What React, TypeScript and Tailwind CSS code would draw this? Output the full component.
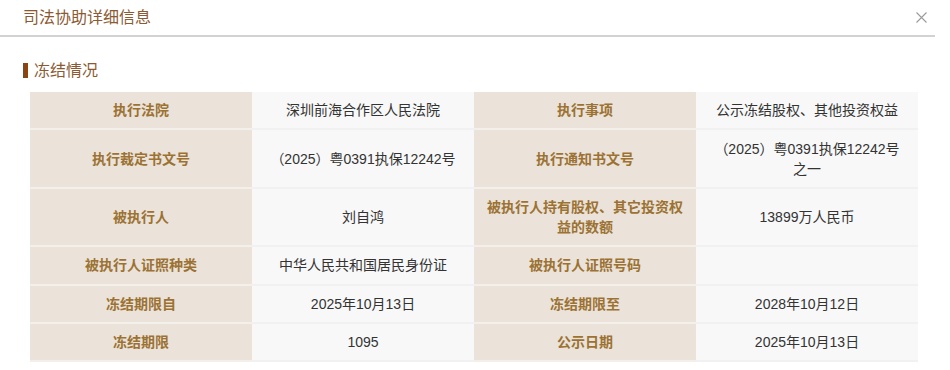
import React from 'react'

const rows: [string, string, string, string][] = [
  ['执行法院', '深圳前海合作区人民法院', '执行事项', '公示冻结股权、其他投资权益'],
  ['执行裁定书文号', '（2025）粤0391执保12242号', '执行通知书文号', '（2025）粤0391执保12242号之一'],
  ['被执行人', '刘自鸿', '被执行人持有股权、其它投资权益的数额', '13899万人民币'],
  ['被执行人证照种类', '中华人民共和国居民身份证', '被执行人证照号码', ''],
  ['冻结期限自', '2025年10月13日', '冻结期限至', '2028年10月12日'],
  ['冻结期限', '1095', '公示日期', '2025年10月13日'],
]

function Label({ children }: { children: React.ReactNode }) {
  return (
    <div className="flex items-center justify-center border-b-2 border-[#f3f0eb] bg-[#ebe3d9] px-[10px] py-[8.2px] text-center text-[14px] font-bold leading-[20px] text-[#9b7233]">
      {children}
    </div>
  )
}

function Value({ children }: { children: React.ReactNode }) {
  return (
    <div className="flex items-center justify-center border-b-2 border-[#f1f1f1] bg-[#f8f8f8] px-[18px] py-[8.2px] text-center text-[14px] leading-[20px] text-[#333333]">
      {children}
    </div>
  )
}

export default function App() {
  return (
    <div className="h-[370px] w-[950px] overflow-hidden bg-white font-['Liberation_Sans','Noto_Sans_CJK_SC',sans-serif]">
      <div className="w-[935px]">
        <header className="flex h-[37px] items-center justify-between border-b-2 border-[#d2d2d2] pl-[23px] pr-[8px]">
          <h1 className="text-[16px] leading-[16px] text-[#8b5a33]">司法协助详细信息</h1>
          <button className="flex h-[12px] w-[12px] items-center justify-center text-[#9a9a9a]">
            <svg width="11" height="11" viewBox="0 0 11 11" fill="none" stroke="currentColor" strokeWidth="1.1">
              <path d="M0.5 0.5L10.5 10.5M10.5 0.5L0.5 10.5" />
            </svg>
          </button>
        </header>

        <div className="mt-[25px] flex items-center pl-[23px]">
          <span className="h-[15px] w-[5px] bg-[#8b4513]" />
          <h2 className="ml-[6px] text-[16px] leading-[17px] text-[#8b5a33]">冻结情况</h2>
        </div>

        <div className="ml-[30px] mt-[13px] grid w-[888px] grid-cols-[222px_222px_222px_222px] border-r border-[#f0f0f0]">
          {rows.map(([l1, v1, l2, v2]) => (
            <React.Fragment key={l1}>
              <Label>{l1}</Label>
              <Value>{v1}</Value>
              <Label>{l2}</Label>
              <Value>{v2}</Value>
            </React.Fragment>
          ))}
        </div>
      </div>
    </div>
  )
}
